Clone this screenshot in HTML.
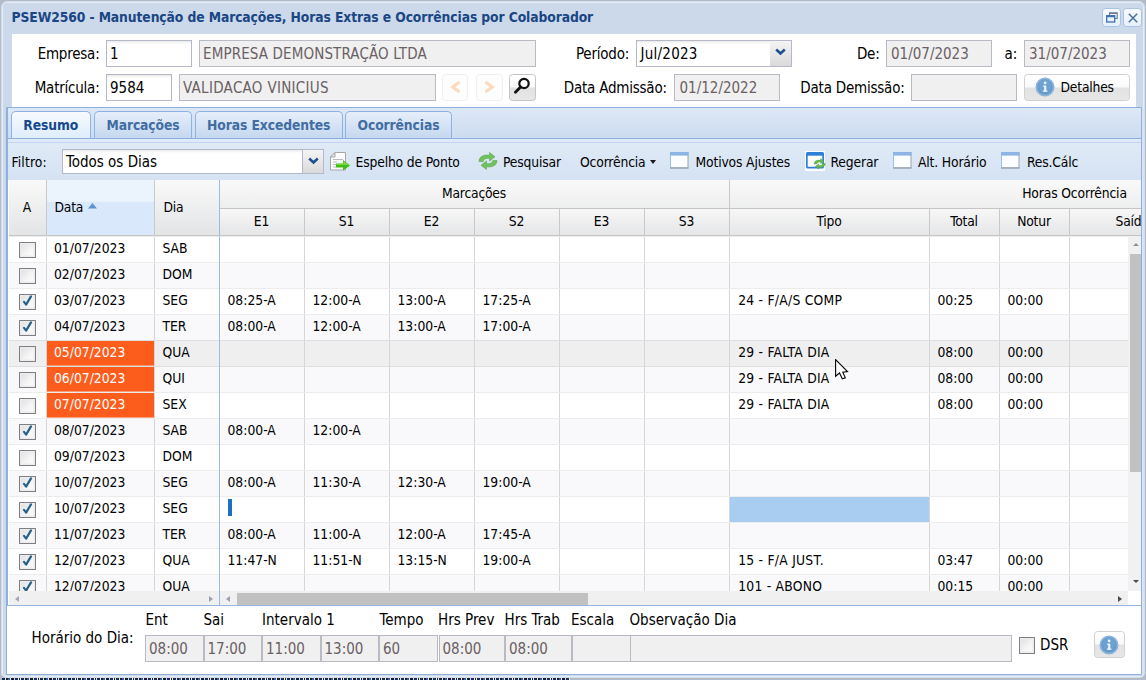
<!DOCTYPE html>
<html lang="pt-BR"><head><meta charset="utf-8"><title>PSEW2560</title>
<style>
*{box-sizing:border-box;margin:0;padding:0}
html,body{width:1146px;height:680px;overflow:hidden}
body{position:relative;background:#b3bac8;font-family:"DejaVu Sans Condensed","Liberation Sans",sans-serif;font-size:15px;color:#000;}
.abs{position:absolute}
#win{position:absolute;left:1px;top:1px;width:1144px;height:677px;background:#ccd9ea;border:1px solid #d3dce9;border-radius:6px 6px 5px 5px;box-shadow:inset 0 0 0 1px #e6edf6;}
#title{position:absolute;left:11.5px;top:7px;height:20px;line-height:20px;font-size:13.75px;font-weight:bold;color:#1a4684;white-space:nowrap;letter-spacing:-0.1px}
.tool{position:absolute;top:8px;width:18px;height:18.500px;border:1px solid #a9c3e4;border-radius:3.500px;background:linear-gradient(#f6faff,#e6f0fb)}
#form{position:absolute;left:11.5px;top:33.5px;width:1124.5px;height:73px;background:#fff}
.lbl{position:absolute;height:26.5px;line-height:28.5px;letter-spacing:-0.22px;white-space:nowrap;font-size:15px;color:#000}
.lbl.r{text-align:right}
.fld{position:absolute;height:26.5px;line-height:26.5px;border:1px solid #b5b8c8;background:#fff linear-gradient(#e9e9e9 0,#fafafa 2px,#fff 4px);padding-left:3px;font-size:15px;white-space:nowrap;overflow:hidden}
.fld.ro{background:#f0f0f0;color:#6a6064;border-color:#b9bac4}
.btn{position:absolute;border:1px solid #d1d1d1;border-radius:3.5px;background:linear-gradient(#ffffff 0,#f9f9f9 48%,#e2e2e2 52%,#e7e7e7 100%);}
.btn.dis{background:#fdfdfd;border-color:#efefef}
/* tab panel */
#tabpanel{position:absolute;left:6px;top:107px;width:1136px;height:568px;background:#fff;border:1px solid #8fb0dc;border-width:1px 1px 1px 2px}
#tabbar{position:absolute;left:8px;top:108px;width:1133px;height:30px;background:linear-gradient(#dde8f6,#ccdcf0)}
.tab{position:absolute;top:111px;height:27px;border:1px solid #8db2e3;border-bottom:none;border-radius:5px 5px 0 0;background:linear-gradient(#e6eefa,#c5d8ef);font-size:13.75px;font-weight:bold;color:#416da3;text-align:center;line-height:26px;white-space:nowrap;letter-spacing:-0.1px}
.tab.act{background:linear-gradient(#f7fafe,#deecfd);color:#15498b;height:28px}
#tabstrip{position:absolute;left:8px;top:138px;width:1133px;height:5px;background:#deeafa;border-top:1px solid #8fb0dc;border-bottom:1px solid #c3d5ee}
#toolbar{position:absolute;left:8px;top:143px;width:1133px;height:37px;background:linear-gradient(#dfeaf6,#d5e2f2)}
.tbt{position:absolute;top:149px;height:24px;line-height:27px;letter-spacing:-0.15px;font-size:13.75px;white-space:nowrap;color:#000}
.ico{position:absolute}
/* grid header */
#ghead{position:absolute;left:8.5px;top:180px;width:1132.5px;height:56px;background:linear-gradient(#f9f9f9,#e3e4e6);border-bottom:1px solid #c5c5c5;overflow:hidden}
.hc{position:absolute;letter-spacing:-0.2px;font-size:13.75px;line-height:27px;height:27px;white-space:nowrap;text-align:center;border-right:1px solid #c9c9c9}
.hc.sub{top:28px;border-top:1px solid #c5c5c5;background:linear-gradient(#f7f7f7,#e4e5e7);height:28px;line-height:24.5px}
.hc.grp{top:0;height:28px;line-height:26px}
.hc.tall{top:0;height:56px;line-height:54px}
/* grid body */
#gridbody{position:absolute;left:8.5px;top:236px;width:1119.5px;height:355px;overflow:hidden;background:#fff}
.row{position:absolute;left:0;width:1140px;height:26px;background:#fff;border-top:1px solid #ececec}
.row.alt{background:#f9f9fb}
.row.hov{background:#efefef;border-top-color:#dedede}
.row.hov+.row{border-top-color:#dedede}
.c{position:absolute;top:0;height:25px;line-height:23px;font-size:13.75px;white-space:nowrap;border-right:1px solid #d6d6d6;padding-left:8px;overflow:hidden}
.c>span:not(.cb){position:relative;top:0px}
.cA{left:0;width:38px;padding:0}
.cData{left:38px;width:108px;padding-left:7.5px}
.cDia{left:146px;width:65px;border-right:1px solid #99bbe8}
.cE1{left:211px;width:85px}.cS1{left:296px;width:85px}.cE2{left:381px;width:85px}.cS2{left:466px;width:85px}.cE3{left:551px;width:85px}.cS3{left:636px;width:85px}
.cTipo{left:721px;width:200px;padding-left:8.7px;letter-spacing:.25px}.cTotal{left:921px;width:70px}.cNotur{left:991px;width:70px}.cSaid{left:1061px;width:80px;border-right:none}
.c.org{background:linear-gradient(#fc5c1c,#fc5c1c) 0 0/100% 24.6px no-repeat;color:#fff}
.c.sel{background:#a9cdf0}
.cb,.c .cb{position:absolute;display:block;left:10.5px;top:4.5px;width:16.5px;height:16.5px;border:1.4px solid #7f7f83;border-radius:.5px;background:linear-gradient(135deg,#dcdcde 0,#f4f4f5 55%,#fdfdfd 100%);box-shadow:inset 0 0 0 1.5px #ececee}
.cb svg{position:absolute;left:-1.4px;top:-1.4px}
.caret{position:absolute;left:8.5px;top:2px;width:4px;height:17px;background:#1c6fc4}
/* scrollbars */
#vsb{position:absolute;left:1128px;top:236px;width:13px;height:355px;background:#f1f1f1}
#vthumb{position:absolute;left:2px;top:17.5px;width:11px;height:218px;background:#c1c1c1}
.hsb{position:absolute;top:591px;height:14px;background:#f0f0f0}
/* bottom */
#bottom{position:absolute;left:7px;top:605px;width:1134px;height:69px;background:#fff;border-top:1px solid #99b6e0}
.sl{position:absolute;font-size:15px;white-space:nowrap;line-height:18px;height:18px}

</style></head>
<body>
<div id="win"></div>
<div id="title">PSEW2560 - Manutenção de Marcações, Horas Extras e Ocorrências por Colaborador</div>
<div class="tool" style="left:1102px;width:18.500px"><svg class="abs" style="left:2.500px;top:3px" width="12" height="11" viewBox="0 0 12 11"><path d="M3.500 3V.8h7.700v5.700H9" fill="none" stroke="#5f7fae" stroke-width="1.100"/><path d="M3.500 1.500h7.700" stroke="#8a6f86" stroke-width="1"/><rect x=".7" y="3.700" width="8" height="6.300" fill="#e9f1fb" stroke="#3e6fa9" stroke-width="1.300"/><path d="M.7 4.600h8" stroke="#3e6fa9" stroke-width="1.200"/></svg></div>
<div class="tool" style="left:1123px;width:18.500px"><svg class="abs" style="left:3.500px;top:3.500px" width="10" height="10" viewBox="0 0 10 10"><path d="M.8.800l8.400 8.400M9.200.800l-8.400 8.400" stroke="#4a6f9f" stroke-width="1.500" fill="none"/></svg></div>
<div id="form"></div>
<!-- row 1 -->
<div class="lbl r" style="left:20px;top:40px;width:79.5px">Empresa:</div>
<div class="fld" style="left:106px;top:40px;width:85.5px">1</div>
<div class="fld ro" style="left:199px;top:40px;width:336.5px;letter-spacing:0.12px">EMPRESA DEMONSTRAÇÃO LTDA</div>
<div class="lbl r" style="left:560px;top:40px;width:69px">Período:</div>
<div class="fld" style="left:636px;top:40px;width:134.500px;letter-spacing:.25px;padding-left:3.500px">Jul/2023</div>
<div class="abs" id="trg1" style="left:769.5px;top:40px;width:22px;height:26.5px;border:1px solid #b5b8c8;border-left:none;background:linear-gradient(#f4f4f4,#dadada)"><svg class="abs" style="left:5.500px;top:7px" width="11" height="8" viewBox="0 0 11 8"><path d="M1.200 1.500l4.300 4 4.300-4" fill="none" stroke="#1f4f8f" stroke-width="2.600"/></svg></div>
<div class="lbl r" style="left:840px;top:40px;width:39.5px">De:</div>
<div class="fld ro" style="left:885.500px;top:40px;width:106px;padding-left:4.500px">01/07/2023</div>
<div class="lbl r" style="left:1000px;top:40px;width:17px">a:</div>
<div class="fld ro" style="left:1024px;top:40px;width:105.500px;padding-left:4px">31/07/2023</div>
<!-- row 2 -->
<div class="lbl r" style="left:20px;top:74px;width:79.5px">Matrícula:</div>
<div class="fld" style="left:106px;top:74px;width:65.5px">9584</div>
<div class="fld ro" style="left:179px;top:74px;width:256.5px;letter-spacing:0.3px">VALIDACAO VINICIUS</div>
<div class="btn dis" style="left:442px;top:74px;width:26px;height:26.500px"><svg class="abs" style="left:7px;top:6px" width="11" height="12" viewBox="0 0 11 12"><path d="M9.5 1L2.8 6l6.700 5" fill="none" stroke="#fbdcbb" stroke-width="3.200"/></svg></div>
<div class="btn dis" style="left:476px;top:74px;width:26.500px;height:26.500px"><svg class="abs" style="left:7px;top:6px" width="11" height="12" viewBox="0 0 11 12"><path d="M1.500 1L8.200 6l-6.700 5" fill="none" stroke="#fbdcbb" stroke-width="3.200"/></svg></div>
<div class="btn" style="left:509px;top:74px;width:27px;height:26.5px;border-color:#c4c4c4"><svg class="abs" style="left:3px;top:1.500px" width="18" height="18" viewBox="0 0 18 18"><circle cx="11" cy="6.500" r="4.700" fill="#fdfdfd" stroke="#111" stroke-width="2.200"/><path d="M7.600 10L2.400 15.200" stroke="#111" stroke-width="2.800" stroke-linecap="round"/></svg></div>
<div class="lbl r" style="left:540px;top:74px;width:126.800px">Data Admissão:</div>
<div class="fld ro" style="left:674px;top:74px;width:106px;padding-left:4.500px">01/12/2022</div>
<div class="lbl r" style="left:780px;top:74px;width:124.500px">Data Demissão:</div>
<div class="fld ro" style="left:911px;top:74px;width:105.500px"></div>
<div class="btn" style="left:1024px;top:74px;width:105.500px;height:26.500px"></div>
<svg class="abs" style="left:1035px;top:77px" width="20" height="20" viewBox="0 0 20 20"><circle cx="10" cy="10" r="8.600" fill="#6499cc" stroke="#8db3da" stroke-width="1.800"/><circle cx="10" cy="9" r="6.500" fill="#73a6d6" opacity=".6"/><rect x="9.100" y="8.600" width="2.200" height="5.800" fill="#e9f2fb"/><rect x="8.100" y="8.600" width="2" height="1.300" fill="#e9f2fb"/><rect x="7.900" y="13.500" width="4.500" height="1.300" fill="#e9f2fb"/><circle cx="10.100" cy="5.900" r="1.400" fill="#e9f2fb"/></svg>
<div class="lbl" style="left:1060.5px;top:73px;font-size:13.75px;letter-spacing:-0.2px">Detalhes</div>
<!-- tabs -->
<div id="tabpanel"></div>
<div id="tabbar"></div>
<div class="tab act" style="left:11px;width:79.5px">Resumo</div>
<div class="tab" style="left:94px;width:98px">Marcações</div>
<div class="tab" style="left:195px;width:147.500px">Horas Excedentes</div>
<div class="tab" style="left:345px;width:107px">Ocorrências</div>
<div id="tabstrip"></div>
<div id="toolbar"></div>
<div class="tbt" style="left:11.500px;letter-spacing:.15px">Filtro:</div>
<div class="fld" style="left:62px;top:149px;width:241px;height:24.5px;line-height:25.5px">Todos os Dias</div>
<div class="abs" id="trg2" style="left:302.5px;top:149px;width:21px;height:24.5px;border:1px solid #b5b8c8;border-left:none;background:linear-gradient(#f4f4f4,#dadada)"><svg class="abs" style="left:5px;top:7px" width="11" height="8" viewBox="0 0 11 8"><path d="M1.200 1.500l4.300 4 4.300-4" fill="none" stroke="#1f4f8f" stroke-width="2.600"/></svg></div>
<div class="tbt" style="left:355.5px">Espelho de Ponto</div>
<div class="tbt" style="left:503px">Pesquisar</div>
<div class="tbt" style="left:580px">Ocorrência</div>
<div class="abs" style="left:649.500px;top:159.500px;width:0;height:0;border:3.800px solid transparent;border-top:4.200px solid #1a1a1a;border-bottom:none"></div>
<div class="tbt" style="left:695.5px">Motivos Ajustes</div>
<div class="tbt" style="left:830.5px">Regerar</div>
<div class="tbt" style="left:918px">Alt. Horário</div>
<div class="tbt" style="left:1027px">Res.Cálc</div>
<!-- toolbar icons -->
<svg class="ico" style="left:330px;top:152px" width="21" height="19" viewBox="0 0 21 19"><path d="M5 .5H15.500V18H.5V5z" fill="#fcfcfc" stroke="#a6a6a6"/><path d="M.5 5H5V.5z" fill="#e9e9e9" stroke="#a6a6a6" stroke-linejoin="round"/><path d="M3 7.500h10M3 10h4M3 12.500h3M3 15h3" stroke="#b4bcc8"/><path d="M6 11.500h7V8l7 5.500-7 5V15.500H6z" fill="#3cbf12"/><path d="M6.500 12h7V9l5 4h-12z" fill="#7ed63a"/></svg>
<svg class="ico" style="left:478px;top:152px" width="20" height="18" viewBox="0 0 20 18"><path d="M1 9.500C1 4.500 6 2.500 11.500 3.200V.5l5.500 4.300-5.500 4.300V6.300C8 5.800 5.500 7 5.200 9.500z" fill="#72c160" stroke="#5aa84c" stroke-width=".6"/><path d="M19 8.500c0 5-5 7-10.500 6.300V17.500L3 13.200l5.500-4.300v2.800c3.500.5 6-.7 6.300-3.200z" fill="#72c160" stroke="#5aa84c" stroke-width=".6"/></svg>
<svg class="ico" style="left:670px;top:152px" width="19" height="17" viewBox="0 0 19 17"><rect x=".5" y=".5" width="17.500" height="15.500" fill="#fbfcfe" stroke="#9aa4b4" stroke-width="1"/><rect x="0" y="0" width="18.500" height="3.600" fill="#8db4e4"/><rect x="0" y="3" width="1" height="13" fill="#9dc0ea"/><rect x="0" y="15.300" width="18.500" height="1.200" fill="#98a1b0"/></svg>
<div class="abs" style="left:805px;top:150.500px;width:20px;height:20px;background:#fafcfe"></div>
<svg class="ico" style="left:806px;top:152px" width="20" height="19" viewBox="0 0 20 19"><rect x=".85" y=".85" width="16.300" height="14.800" rx="1" fill="#fdfdfd" stroke="#2f7fd8" stroke-width="1.700"/><rect x=".5" y=".5" width="17" height="3.200" fill="#2f7fd8"/><g transform="translate(7.500,6.200) scale(.62)"><path d="M1 9.500C1 4.500 6 2.500 11.500 3.200V.5l5.500 4.300-5.500 4.300V6.300C8 5.800 5.500 7 5.200 9.500z" fill="#66b852" stroke="#4d9c3f" stroke-width=".6"/><path d="M19 8.500c0 5-5 7-10.500 6.300V17.500L3 13.200l5.500-4.300v2.800c3.500.5 6-.7 6.300-3.200z" fill="#66b852" stroke="#4d9c3f" stroke-width=".6"/></g></svg>
<svg class="ico" style="left:893px;top:152px" width="19" height="17" viewBox="0 0 19 17"><rect x=".5" y=".5" width="17.500" height="15.500" fill="#fbfcfe" stroke="#9aa4b4" stroke-width="1"/><rect x="0" y="0" width="18.500" height="3.600" fill="#8db4e4"/><rect x="0" y="3" width="1" height="13" fill="#9dc0ea"/><rect x="0" y="15.300" width="18.500" height="1.200" fill="#98a1b0"/></svg>
<svg class="ico" style="left:1001px;top:152px" width="19" height="17" viewBox="0 0 19 17"><rect x=".5" y=".5" width="17.500" height="15.500" fill="#fbfcfe" stroke="#9aa4b4" stroke-width="1"/><rect x="0" y="0" width="18.500" height="3.600" fill="#8db4e4"/><rect x="0" y="3" width="1" height="13" fill="#9dc0ea"/><rect x="0" y="15.300" width="18.500" height="1.200" fill="#98a1b0"/></svg>
<!-- grid header -->
<div id="ghead">
<div class="hc tall" style="left:0;width:38px">A</div>
<div class="hc tall" style="left:38px;width:108px;text-align:left;padding-left:8px;background:linear-gradient(#ebf3fd 0,#ebf3fd 38%,#d9e8fb 40%,#d9e8fb 100%)">Data<svg style="position:absolute;left:41px;top:23px" width="9" height="6" viewBox="0 0 9 6"><path d="M0 5.500L4.500 0 9 5.500z" fill="#5f93cf"/></svg></div>
<div class="hc tall" style="left:146px;width:65px;text-align:left;padding-left:9px;border-right:1px solid #99bbe8">Dia</div>
<div class="hc grp" style="left:211px;width:510px">Marcações</div>
<div class="hc grp" style="left:721px;width:700px;border-right:none;text-align:left;padding-left:292.700px;letter-spacing:-0.14px">Horas Ocorrência</div>
<div class="hc sub" style="left:211px;width:85px">E1</div>
<div class="hc sub" style="left:296px;width:85px">S1</div>
<div class="hc sub" style="left:381px;width:85px">E2</div>
<div class="hc sub" style="left:466px;width:85px">S2</div>
<div class="hc sub" style="left:551px;width:85px">E3</div>
<div class="hc sub" style="left:636px;width:85px">S3</div>
<div class="hc sub" style="left:721px;width:200px">Tipo</div>
<div class="hc sub" style="left:921px;width:70px">Total</div>
<div class="hc sub" style="left:991px;width:70px">Notur</div>
<div class="hc sub" style="left:1061px;width:120px;border-right:none;text-align:left;padding-left:46px">Saída</div>
</div>
<div id="gridbody">
<div class="row" style="top:0px"><div class="c cA"><span class="cb"></span></div><div class="c cData"><span>01/07/2023</span></div><div class="c cDia"><span>SAB</span></div><div class="c cE1"></div><div class="c cS1"></div><div class="c cE2"></div><div class="c cS2"></div><div class="c cE3"></div><div class="c cS3"></div><div class="c cTipo"></div><div class="c cTotal"></div><div class="c cNotur"></div><div class="c cSaid"></div></div>
<div class="row alt" style="top:26px"><div class="c cA"><span class="cb"></span></div><div class="c cData"><span>02/07/2023</span></div><div class="c cDia"><span>DOM</span></div><div class="c cE1"></div><div class="c cS1"></div><div class="c cE2"></div><div class="c cS2"></div><div class="c cE3"></div><div class="c cS3"></div><div class="c cTipo"></div><div class="c cTotal"></div><div class="c cNotur"></div><div class="c cSaid"></div></div>
<div class="row" style="top:52px"><div class="c cA"><span class="cb on"><svg viewBox="0 0 16 16" width="16" height="16"><path d="M5 8.9 L7.1 11.6 L12 3.4" fill="none" stroke="#27618a" stroke-width="2.2" stroke-linecap="round" stroke-linejoin="round"/></svg></span></div><div class="c cData"><span>03/07/2023</span></div><div class="c cDia"><span>SEG</span></div><div class="c cE1"><span>08:25-A</span></div><div class="c cS1"><span>12:00-A</span></div><div class="c cE2"><span>13:00-A</span></div><div class="c cS2"><span>17:25-A</span></div><div class="c cE3"></div><div class="c cS3"></div><div class="c cTipo"><span>24 - F/A/S COMP</span></div><div class="c cTotal"><span>00:25</span></div><div class="c cNotur"><span>00:00</span></div><div class="c cSaid"></div></div>
<div class="row alt" style="top:78px"><div class="c cA"><span class="cb on"><svg viewBox="0 0 16 16" width="16" height="16"><path d="M5 8.9 L7.1 11.6 L12 3.4" fill="none" stroke="#27618a" stroke-width="2.2" stroke-linecap="round" stroke-linejoin="round"/></svg></span></div><div class="c cData"><span>04/07/2023</span></div><div class="c cDia"><span>TER</span></div><div class="c cE1"><span>08:00-A</span></div><div class="c cS1"><span>12:00-A</span></div><div class="c cE2"><span>13:00-A</span></div><div class="c cS2"><span>17:00-A</span></div><div class="c cE3"></div><div class="c cS3"></div><div class="c cTipo"></div><div class="c cTotal"></div><div class="c cNotur"></div><div class="c cSaid"></div></div>
<div class="row hov" style="top:104px"><div class="c cA"><span class="cb"></span></div><div class="c cData org"><span>05/07/2023</span></div><div class="c cDia"><span>QUA</span></div><div class="c cE1"></div><div class="c cS1"></div><div class="c cE2"></div><div class="c cS2"></div><div class="c cE3"></div><div class="c cS3"></div><div class="c cTipo"><span>29 - FALTA DIA</span></div><div class="c cTotal"><span>08:00</span></div><div class="c cNotur"><span>00:00</span></div><div class="c cSaid"></div></div>
<div class="row alt" style="top:130px"><div class="c cA"><span class="cb"></span></div><div class="c cData org"><span>06/07/2023</span></div><div class="c cDia"><span>QUI</span></div><div class="c cE1"></div><div class="c cS1"></div><div class="c cE2"></div><div class="c cS2"></div><div class="c cE3"></div><div class="c cS3"></div><div class="c cTipo"><span>29 - FALTA DIA</span></div><div class="c cTotal"><span>08:00</span></div><div class="c cNotur"><span>00:00</span></div><div class="c cSaid"></div></div>
<div class="row" style="top:156px"><div class="c cA"><span class="cb"></span></div><div class="c cData org"><span>07/07/2023</span></div><div class="c cDia"><span>SEX</span></div><div class="c cE1"></div><div class="c cS1"></div><div class="c cE2"></div><div class="c cS2"></div><div class="c cE3"></div><div class="c cS3"></div><div class="c cTipo"><span>29 - FALTA DIA</span></div><div class="c cTotal"><span>08:00</span></div><div class="c cNotur"><span>00:00</span></div><div class="c cSaid"></div></div>
<div class="row alt" style="top:182px"><div class="c cA"><span class="cb on"><svg viewBox="0 0 16 16" width="16" height="16"><path d="M5 8.9 L7.1 11.6 L12 3.4" fill="none" stroke="#27618a" stroke-width="2.2" stroke-linecap="round" stroke-linejoin="round"/></svg></span></div><div class="c cData"><span>08/07/2023</span></div><div class="c cDia"><span>SAB</span></div><div class="c cE1"><span>08:00-A</span></div><div class="c cS1"><span>12:00-A</span></div><div class="c cE2"></div><div class="c cS2"></div><div class="c cE3"></div><div class="c cS3"></div><div class="c cTipo"></div><div class="c cTotal"></div><div class="c cNotur"></div><div class="c cSaid"></div></div>
<div class="row" style="top:208px"><div class="c cA"><span class="cb"></span></div><div class="c cData"><span>09/07/2023</span></div><div class="c cDia"><span>DOM</span></div><div class="c cE1"></div><div class="c cS1"></div><div class="c cE2"></div><div class="c cS2"></div><div class="c cE3"></div><div class="c cS3"></div><div class="c cTipo"></div><div class="c cTotal"></div><div class="c cNotur"></div><div class="c cSaid"></div></div>
<div class="row alt" style="top:234px"><div class="c cA"><span class="cb on"><svg viewBox="0 0 16 16" width="16" height="16"><path d="M5 8.9 L7.1 11.6 L12 3.4" fill="none" stroke="#27618a" stroke-width="2.2" stroke-linecap="round" stroke-linejoin="round"/></svg></span></div><div class="c cData"><span>10/07/2023</span></div><div class="c cDia"><span>SEG</span></div><div class="c cE1"><span>08:00-A</span></div><div class="c cS1"><span>11:30-A</span></div><div class="c cE2"><span>12:30-A</span></div><div class="c cS2"><span>19:00-A</span></div><div class="c cE3"></div><div class="c cS3"></div><div class="c cTipo"></div><div class="c cTotal"></div><div class="c cNotur"></div><div class="c cSaid"></div></div>
<div class="row" style="top:260px"><div class="c cA"><span class="cb on"><svg viewBox="0 0 16 16" width="16" height="16"><path d="M5 8.9 L7.1 11.6 L12 3.4" fill="none" stroke="#27618a" stroke-width="2.2" stroke-linecap="round" stroke-linejoin="round"/></svg></span></div><div class="c cData"><span>10/07/2023</span></div><div class="c cDia"><span>SEG</span></div><div class="c cE1"><i class="caret"></i></div><div class="c cS1"></div><div class="c cE2"></div><div class="c cS2"></div><div class="c cE3"></div><div class="c cS3"></div><div class="c cTipo sel"></div><div class="c cTotal"></div><div class="c cNotur"></div><div class="c cSaid"></div></div>
<div class="row alt" style="top:286px"><div class="c cA"><span class="cb on"><svg viewBox="0 0 16 16" width="16" height="16"><path d="M5 8.9 L7.1 11.6 L12 3.4" fill="none" stroke="#27618a" stroke-width="2.2" stroke-linecap="round" stroke-linejoin="round"/></svg></span></div><div class="c cData"><span>11/07/2023</span></div><div class="c cDia"><span>TER</span></div><div class="c cE1"><span>08:00-A</span></div><div class="c cS1"><span>11:00-A</span></div><div class="c cE2"><span>12:00-A</span></div><div class="c cS2"><span>17:45-A</span></div><div class="c cE3"></div><div class="c cS3"></div><div class="c cTipo"></div><div class="c cTotal"></div><div class="c cNotur"></div><div class="c cSaid"></div></div>
<div class="row" style="top:312px"><div class="c cA"><span class="cb on"><svg viewBox="0 0 16 16" width="16" height="16"><path d="M5 8.9 L7.1 11.6 L12 3.4" fill="none" stroke="#27618a" stroke-width="2.2" stroke-linecap="round" stroke-linejoin="round"/></svg></span></div><div class="c cData"><span>12/07/2023</span></div><div class="c cDia"><span>QUA</span></div><div class="c cE1"><span>11:47-N</span></div><div class="c cS1"><span>11:51-N</span></div><div class="c cE2"><span>13:15-N</span></div><div class="c cS2"><span>19:00-A</span></div><div class="c cE3"></div><div class="c cS3"></div><div class="c cTipo"><span>15 - F/A JUST.</span></div><div class="c cTotal"><span>03:47</span></div><div class="c cNotur"><span>00:00</span></div><div class="c cSaid"></div></div>
<div class="row alt" style="top:338px"><div class="c cA"><span class="cb on"><svg viewBox="0 0 16 16" width="16" height="16"><path d="M5 8.9 L7.1 11.6 L12 3.4" fill="none" stroke="#27618a" stroke-width="2.2" stroke-linecap="round" stroke-linejoin="round"/></svg></span></div><div class="c cData"><span>12/07/2023</span></div><div class="c cDia"><span>QUA</span></div><div class="c cE1"></div><div class="c cS1"></div><div class="c cE2"></div><div class="c cS2"></div><div class="c cE3"></div><div class="c cS3"></div><div class="c cTipo"><span>101 - ABONO</span></div><div class="c cTotal"><span>00:15</span></div><div class="c cNotur"><span>00:00</span></div><div class="c cSaid"></div></div>
</div>
<!-- scrollbars -->
<div id="vsb"><div id="vthumb"></div>
<div class="abs" style="left:4.800px;top:7px;width:0;height:0;border:3.500px solid transparent;border-bottom:3.900px solid #8e919b;border-top:none"></div>
<div class="abs" style="left:5px;top:344px;width:0;height:0;border:3.500px solid transparent;border-top:3.800px solid #4f4650;border-bottom:none"></div>
</div>
<div class="hsb" style="left:8.500px;width:211px"></div>
<div class="hsb" style="left:219.500px;width:908.500px"></div>
<div class="abs" style="left:1128px;top:591px;width:13px;height:14px;background:#fff"></div>
<div class="abs" style="left:1142px;top:107px;width:2px;height:568px;background:#dae4f1"></div>
<div class="abs" style="left:219px;top:236px;width:1px;height:369px;background:#99bbe8"></div>
<div class="abs" style="left:14.500px;top:595.500px;width:0;height:0;border:3.700px solid transparent;border-right:4.300px solid #a3a7b3;border-left:none"></div>
<div class="abs" style="left:208.800px;top:595.500px;width:0;height:0;border:3.700px solid transparent;border-left:4.300px solid #9aa0b0;border-right:none"></div>
<div class="abs" style="left:225.800px;top:595.500px;width:0;height:0;border:3.700px solid transparent;border-right:4.300px solid #9aa0b0;border-left:none"></div>
<div class="abs" style="left:1118px;top:595.500px;width:0;height:0;border:3.700px solid transparent;border-left:4.300px solid #4f4650;border-right:none"></div>
<div class="abs" style="left:237px;top:593px;width:351px;height:12px;background:#c1c1c1"></div>
<!-- bottom panel -->
<div id="bottom"></div>
<div class="sl" style="left:31.500px;top:629px">Horário do Dia:</div>
<div class="sl" style="left:145.500px;top:610.500px">Ent</div>
<div class="sl" style="left:203.500px;top:610.500px">Sai</div>
<div class="sl" style="left:262px;top:610.500px">Intervalo 1</div>
<div class="sl" style="left:379.500px;top:610.500px">Tempo</div>
<div class="sl" style="left:438px;top:610.500px">Hrs Prev</div>
<div class="sl" style="left:504.500px;top:610.500px">Hrs Trab</div>
<div class="sl" style="left:571px;top:610.500px">Escala</div>
<div class="sl" style="left:629.500px;top:610.500px">Observação Dia</div>
<div class="fld ro" style="left:145px;top:635px;width:58.500px;height:26.500px;line-height:26.500px">08:00</div>
<div class="fld ro" style="left:203.500px;top:635px;width:58.500px;height:26.500px;line-height:26.500px">17:00</div>
<div class="fld ro" style="left:262px;top:635px;width:58.500px;height:26.500px;line-height:26.500px">11:00</div>
<div class="fld ro" style="left:320.500px;top:635px;width:58.500px;height:26.500px;line-height:26.500px">13:00</div>
<div class="fld ro" style="left:379px;top:635px;width:58.500px;height:26.500px;line-height:26.500px">60</div>
<div class="fld ro" style="left:438.500px;top:635px;width:66.500px;height:26.500px;line-height:26.500px">08:00</div>
<div class="fld ro" style="left:505px;top:635px;width:66.500px;height:26.500px;line-height:26.500px">08:00</div>
<div class="fld ro" style="left:571.500px;top:635px;width:59px;height:26.500px"></div>
<div class="fld ro" style="left:630px;top:635px;width:382px;height:26.500px"></div>
<span class="cb" style="left:1018.500px;top:637px"></span>
<div class="sl" style="left:1040px;top:636px">DSR</div>
<div class="btn" style="left:1093.500px;top:631px;width:31.500px;height:27px"></div>
<svg class="abs" style="left:1098.700px;top:634.700px" width="20" height="20" viewBox="0 0 20 20"><circle cx="10" cy="10" r="8.600" fill="#6499cc" stroke="#8db3da" stroke-width="1.800"/><circle cx="10" cy="9" r="6.500" fill="#73a6d6" opacity=".6"/><rect x="9.100" y="8.600" width="2.200" height="5.800" fill="#e9f2fb"/><rect x="8.100" y="8.600" width="2" height="1.300" fill="#e9f2fb"/><rect x="7.900" y="13.500" width="4.500" height="1.300" fill="#e9f2fb"/><circle cx="10.100" cy="5.900" r="1.400" fill="#e9f2fb"/></svg>
<!-- mouse cursor -->
<svg class="abs" style="left:834.500px;top:359.200px" width="14" height="21" viewBox="0 0 14 21"><path d="M.6.6V17.300L4.500 14l2.800 5.800 3-1-2.500-5.500 4.700-.7z" fill="#fff" stroke="#0a0a0a" stroke-width="1.150" stroke-linejoin="miter"/></svg>
<div class="abs" style="left:2px;top:678px;width:568px;height:2px;background:repeating-linear-gradient(90deg,#1b2a4a 0,#1b2a4a 3px,#dfe5ee 3px,#dfe5ee 4px,#222 4px,#222 6px,#2b5fb3 6px,#2b5fb3 8px,#e4e8ef 8px,#e4e8ef 9.500px,#1a1a2a 9.500px,#1a1a2a 12px,#cfd6e2 12px,#cfd6e2 13px,#16305f 13px,#16305f 16px,#e8ecf2 16px,#e8ecf2 17px,#222 17px,#222 18px,#dfe5ee 18px,#dfe5ee 19px)"></div>
</body></html>
